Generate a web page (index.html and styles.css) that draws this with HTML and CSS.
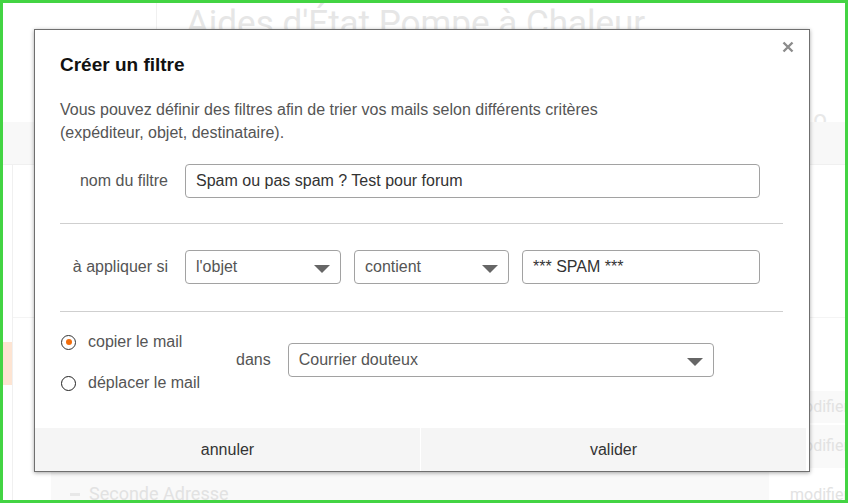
FILE: index.html
```html
<!DOCTYPE html>
<html lang="fr">
<head>
<meta charset="utf-8">
<title>Créer un filtre</title>
<link rel="stylesheet" href="styles.css">
</head>
<body>
<div class="frame">
  <div class="page">
    <header class="top">
      <div class="top-side"></div>
      <div class="top-main">
        <h1 class="site-title">Aides d'État Pompe à Chaleur</h1>
        <div class="sub">Info</div>
      </div>
    </header>
    <div class="band"></div>
    <div class="content">
      <aside class="side"><div class="side-mark"></div></aside>
      <main class="main">
        <div class="block"></div>
        <div class="rows">
          <div class="row row-a"><span class="mod">modifier</span></div>
          <div class="row row-b"><span class="mod">modifier</span></div>
          <div class="row row-c">
            <div class="addr"><span class="dash"></span><span>Seconde Adresse</span></div>
            <span class="mod mod-c">modifier</span>
          </div>
        </div>
      </main>
    </div>
  </div>

  <div class="modal">
    <svg class="close" width="12" height="12" viewBox="0 0 12 12"><path d="M1.5 1.5 L10.5 10.5 M10.5 1.5 L1.5 10.5" stroke="#8c8c8c" stroke-width="2.4" stroke-linecap="butt"/></svg>
    <div class="modal-body">
      <h2 class="m-title">Créer un filtre</h2>
      <p class="m-desc">Vous pouvez définir des filtres afin de trier vos mails selon différents critères<br>(expéditeur, objet, destinataire).</p>

      <div class="f-row">
        <div class="f-label">nom du filtre</div>
        <div class="field field-name value">Spam ou pas spam ? Test pour forum</div>
      </div>
      <div class="sep"></div>

      <div class="f-row f-row2">
        <div class="f-label">à appliquer si</div>
        <div class="field sel sel-1"><span>l'objet</span><svg width="16" height="8" viewBox="0 0 16 8"><polygon points="0,0 16,0 8,8" fill="#666"/></svg></div>
        <div class="field sel sel-2"><span>contient</span><svg width="16" height="8" viewBox="0 0 16 8"><polygon points="0,0 16,0 8,8" fill="#666"/></svg></div>
        <div class="field field-val value">*** SPAM ***</div>
      </div>
      <div class="sep sep2"></div>

      <div class="f-row3">
        <div class="radios">
          <div class="radio-line"><span class="radio on"></span><span>copier le mail</span></div>
          <div class="radio-line"><span class="radio"></span><span>déplacer le mail</span></div>
        </div>
        <div class="dans">dans</div>
        <div class="field sel sel-3"><span>Courrier douteux</span><svg width="16" height="8" viewBox="0 0 16 8"><polygon points="0,0 16,0 8,8" fill="#666"/></svg></div>
      </div>
    </div>
    <div class="m-foot">
      <div class="btn">annuler</div>
      <div class="btn btn-ok">valider</div>
    </div>
  </div>
</div>
</body>
</html>
```

FILE: styles.css
```css
html, body {
  margin: 0;
  padding: 0;
  background: #fff;
}

.frame {
  position: relative;
  width: 848px;
  height: 503px;
  box-sizing: border-box;
  border: 3px solid #43d443;
  overflow: hidden;
  font-family: "Liberation Sans", Arial, sans-serif;
}

/* ---------- faded background page ---------- */
.page {
  display: flex;
  flex-direction: column;
  height: 100%;
}

.top {
  display: flex;
  height: 120px;
  overflow: hidden;
}

.top-side {
  width: 153px;
  border-right: 1px solid #f0f0f0;
}

.top-main {
  flex: 1;
  display: flex;
  flex-direction: column;
  padding-left: 29px;
}

.site-title {
  margin: 1px 0 0;
  font-family: Roboto, "Liberation Sans", sans-serif;
  font-weight: 400;
  font-size: 35px;
  line-height: 40px;
  color: #e6e6e6;
}

.sub {
  margin-top: auto;
  margin-bottom: -12px;
  align-self: flex-end;
  padding-right: 14px;
  letter-spacing: 4px;
  font-family: Roboto, "Liberation Sans", sans-serif;
  font-size: 24px;
  line-height: 30px;
  color: #e8e8e8;
}

.band {
  height: 43px;
  background: #f8f8f8;
  border-bottom: 1px solid #f0f0f0;
}

.content {
  flex: 1;
  display: flex;
}

.side {
  width: 9px;
  border-right: 1px solid #f0f0f0;
  padding-top: 177px;
}

.side-mark {
  height: 43px;
  background: #fde4d2;
}

.main {
  flex: 1;
  display: flex;
  flex-direction: column;
}

.block {
  height: 152px;
  border-bottom: 1px solid #f4f4f4;
}

.rows {
  margin-top: 73px;
  display: flex;
  flex-direction: column;
  gap: 2px;
}

.row {
  display: flex;
  align-items: center;
  justify-content: flex-end;
  background: #f9f9f9;
  margin-left: 38px;
}

.row-a { height: 32px; }
.row-b { height: 43px; }
.row-c {
  height: 30px;
  background: #fff;
  align-items: flex-end;
  margin-left: 0;
}

.mod {
  width: 55px;
  font-family: Roboto, "Liberation Sans", sans-serif;
  font-size: 16px;
  color: #e2e2e2;
  padding-bottom: 2px;
}

.mod-c {
  width: 55px;
  padding-bottom: 0;
  margin-bottom: -4px;
}

.addr {
  flex: 1;
  align-self: stretch;
  margin-left: 38px;
  margin-right: 21px;
  background: #f9f9f9;
  display: flex;
  align-items: flex-end;
  gap: 9px;
  padding-left: 19px;
  font-family: Roboto, "Liberation Sans", sans-serif;
  font-size: 18px;
  color: #e2e2e2;
  margin-bottom: -4px;
}

.dash {
  width: 10px;
  height: 3px;
  background: #e8e8e8;
  margin-bottom: 8px;
}

/* ---------- modal ---------- */
.modal {
  position: absolute;
  left: 31px;
  top: 26px;
  width: 776px;
  height: 443px;
  box-sizing: border-box;
  border: 1px solid #6f6f6f;
  background: #fff;
  box-shadow: 0 1px 4px rgba(0, 0, 0, 0.35);
  display: flex;
  flex-direction: column;
}

.close {
  position: absolute;
  right: 15px;
  top: 11px;
}

.modal-body {
  padding: 0 26px 0 25px;
}

.m-title {
  margin: 23px 0 0;
  font-size: 19px;
  line-height: 24px;
  font-weight: 700;
  color: #111;
}

.m-desc {
  margin: 21px 0 0;
  font-size: 16px;
  line-height: 23px;
  color: #555;
}

.f-row {
  display: flex;
  align-items: center;
  margin-top: 20px;
}

.f-row2 {
  margin-top: 26px;
  gap: 13px;
}

.f-label {
  width: 108px;
  margin-right: 17px;
  text-align: right;
  font-size: 16px;
  color: #555;
}

.f-row2 .f-label {
  margin-right: 4px;
}

.field {
  height: 34px;
  box-sizing: border-box;
  border: 1px solid #a2a2a2;
  border-radius: 4px;
  padding: 0 10px;
  display: flex;
  align-items: center;
  font-size: 16px;
  color: #555;
}

.value {
  color: #333;
}

.field-name { width: 575px; }
.field-val { width: 238px; }

.sel {
  justify-content: space-between;
  padding-right: 10px;
}

.sel svg {
  margin-top: 3px;
}

.sel-1 { width: 156px; }
.sel-2 { width: 155px; }
.sel-3 { width: 426px; margin-top: 13px; }

.sep {
  margin-top: 25px;
  height: 0;
  border-top: 1px solid #cfcfcf;
}

.sep2 {
  margin-top: 27px;
}

.f-row3 {
  display: flex;
  align-items: flex-start;
  margin-top: 18px;
}

.radios {
  width: 176px;
  display: flex;
  flex-direction: column;
  gap: 17px;
}

.radio-line {
  height: 24px;
  display: flex;
  align-items: center;
  font-size: 16px;
  color: #555;
}

.radio {
  width: 15px;
  height: 15px;
  box-sizing: border-box;
  border: 1.5px solid #222;
  border-radius: 50%;
  margin-left: 1px;
  margin-right: 12px;
  display: flex;
  align-items: center;
  justify-content: center;
}

.radio.on {
  border-color: #333;
}

.radio.on::after {
  content: "";
  width: 6px;
  height: 6px;
  border-radius: 50%;
  background: #f26d0c;
}

.dans {
  margin-top: 13px;
  height: 34px;
  display: flex;
  align-items: center;
  margin-right: 17px;
  font-size: 16px;
  color: #555;
}

.m-foot {
  margin-top: auto;
  margin-right: 3px;
  height: 43px;
  display: flex;
  background: #f5f5f5;
}

.btn {
  flex: 1;
  display: flex;
  align-items: center;
  justify-content: center;
  font-size: 16px;
  color: #333;
}

.btn-ok {
  border-left: 1px solid #fff;
}
```
